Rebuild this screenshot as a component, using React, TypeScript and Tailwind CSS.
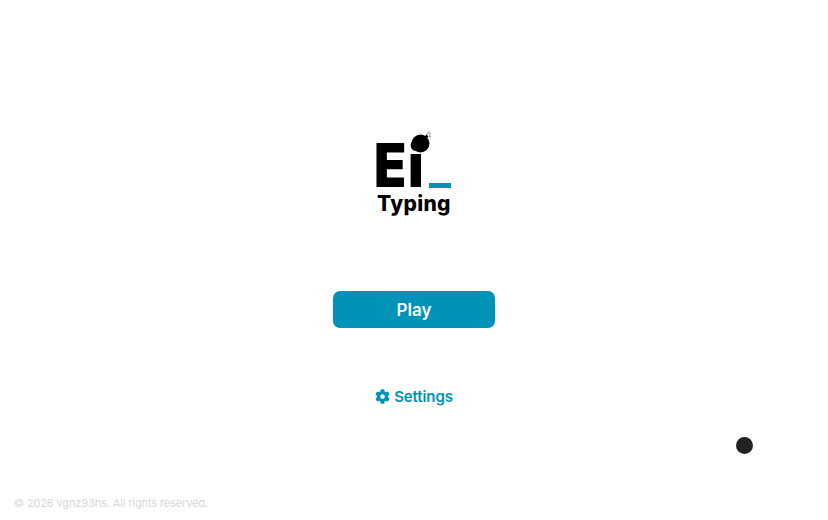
import React from 'react';
import { FaCog } from 'react-icons/fa';

const Bomb = () => (
  <svg width="22" height="22" viewBox="0 0 22 22" className="absolute left-[34px] top-[-1px]">
    <circle cx="9.5" cy="12.5" r="9" fill="#000" />
    <path d="M13 6 L15.5 3.5 L17.5 5.5 L15 8 Z" fill="#000" />
    <path d="M16 4 C16 1.5 18 0.5 19 2 C20 3.5 18 4 18.5 5.5 C19 6.5 19.8 6.5 20 5.5" fill="none" stroke="#555" strokeWidth="0.7" />
  </svg>
);

export default function App() {
  return (
    <div className="relative flex h-[520px] w-[828px] flex-col items-center overflow-hidden bg-white font-['Inter',sans-serif]">
      {/* Logo */}
      <div className="mt-[132px] flex h-[84px] w-[74px] flex-col">
        <div className="relative flex h-[56px] items-end">
          <span className="-ml-[3px] origin-left scale-x-[0.88] text-[60px] leading-[46px] font-black tracking-[2px] text-black">Ei</span>
          <Bomb />
          <div className="absolute right-0 bottom-0 h-[5px] w-[22px] bg-[#0093b8]" />
        </div>
        <span className="mt-[4px] text-[21px] leading-[24px] font-extrabold tracking-[0.3px] whitespace-nowrap text-black">Typing</span>
      </div>

      <button className="mt-[75px] flex h-[37px] w-[162px] items-center justify-center rounded-[7px] bg-[#0093b8] pt-[2px] text-[17px] font-semibold text-white">
        Play
      </button>

      <button className="mt-[58px] flex h-[20px] items-center gap-[4px] pt-[2px] text-[15px] font-semibold tracking-[-0.1px] text-[#0093b8]">
        <FaCog size={15} className="-translate-y-px" />
        Settings
      </button>

      <p className="mt-auto mb-[10px] self-start pl-[14px] text-[11px] leading-[14px] tracking-[-0.13px] text-[#d5d8dc]">
        © 2026 vgnz93hs. All rights reserved.
      </p>

      {/* cursor follower */}
      <div className="absolute top-[437px] left-[736px] h-[17px] w-[17px] rounded-full bg-[#222222]" />
    </div>
  );
}
